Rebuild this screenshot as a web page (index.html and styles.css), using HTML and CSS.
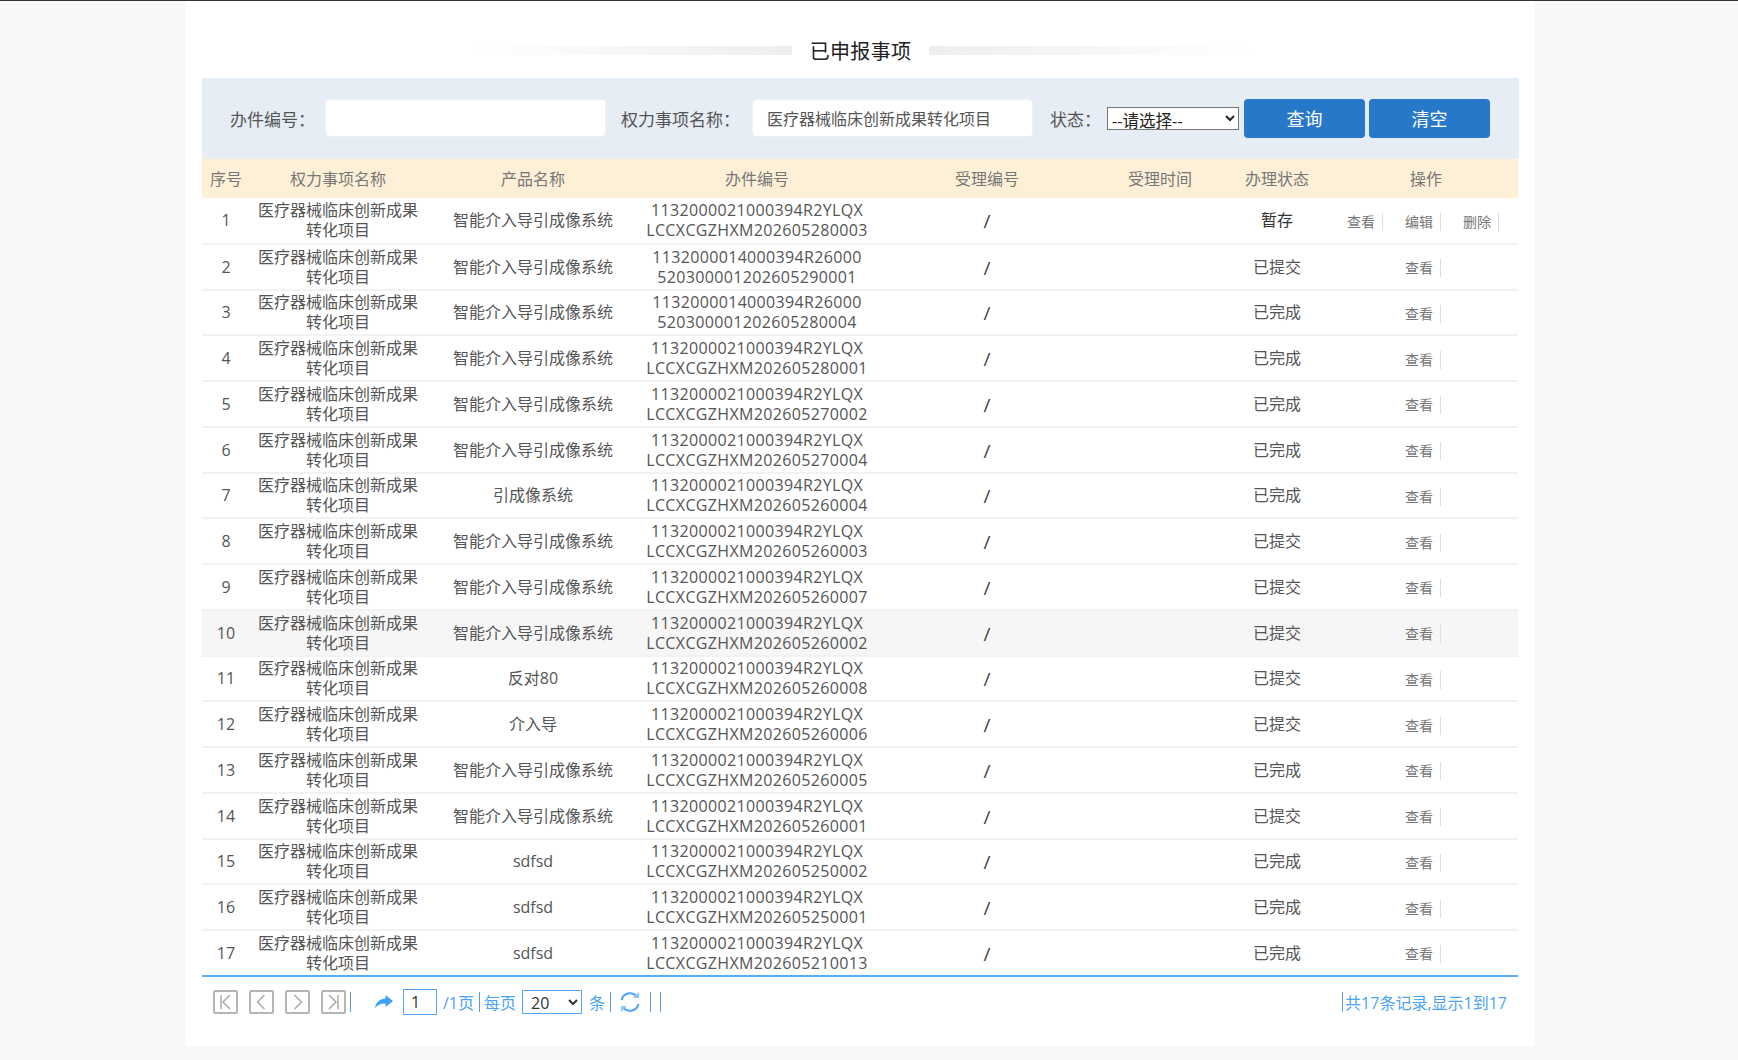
FILE: index.html
```html
<!DOCTYPE html>
<html lang="zh-CN">

<head>
    <meta charset="UTF-8">
    <title>已申报事项</title>
    <link rel="stylesheet" href="styles.css">
</head>

<body>
    <div class="panel">
        <div class="title-row">
            <span class="bar bar-left"></span>
            <h2>已申报事项</h2>
            <span class="bar bar-right"></span>
        </div>

        <!-- Search -->
        <div class="search">
            <label class="lbl-no">办件编号：</label>
            <input class="txt" type="text">
            <label class="lbl-name">权力事项名称：</label>
            <input class="txt" type="text" value="医疗器械临床创新成果转化项目">
            <label class="lbl-state">状态：</label>
            <select class="state"><option>--请选择--</option></select>
            <button class="btn">查询</button>
            <button class="btn">清空</button>
        </div>

        <table class="list">
            <colgroup>
                <col class="c1"><col class="c2"><col class="c3"><col class="c4">
                <col class="c5"><col class="c6"><col class="c7"><col class="c8">
            </colgroup>
            <thead>
                <tr><th>序号</th><th>权力事项名称</th><th>产品名称</th><th>办件编号</th><th>受理编号</th><th>受理时间</th><th>办理状态</th><th>操作</th></tr>
            </thead>
            <tbody>
                <tr><td>1</td><td>医疗器械临床创新成果<br>转化项目</td><td>智能介入导引成像系统</td><td class="no">1132000021000394R2YLQX<br>LCCXCGZHXM202605280003</td><td class="slash">/</td><td></td><td class="dark">暂存</td><td class="ops"><a>查看</a><a>编辑</a><a>删除</a></td></tr>
                <tr><td>2</td><td>医疗器械临床创新成果<br>转化项目</td><td>智能介入导引成像系统</td><td class="no">1132000014000394R26000<br>520300001202605290001</td><td class="slash">/</td><td></td><td>已提交</td><td class="ops"><a>查看</a></td></tr>
                <tr><td>3</td><td>医疗器械临床创新成果<br>转化项目</td><td>智能介入导引成像系统</td><td class="no">1132000014000394R26000<br>520300001202605280004</td><td class="slash">/</td><td></td><td>已完成</td><td class="ops"><a>查看</a></td></tr>
                <tr><td>4</td><td>医疗器械临床创新成果<br>转化项目</td><td>智能介入导引成像系统</td><td class="no">1132000021000394R2YLQX<br>LCCXCGZHXM202605280001</td><td class="slash">/</td><td></td><td>已完成</td><td class="ops"><a>查看</a></td></tr>
                <tr><td>5</td><td>医疗器械临床创新成果<br>转化项目</td><td>智能介入导引成像系统</td><td class="no">1132000021000394R2YLQX<br>LCCXCGZHXM202605270002</td><td class="slash">/</td><td></td><td>已完成</td><td class="ops"><a>查看</a></td></tr>
                <tr><td>6</td><td>医疗器械临床创新成果<br>转化项目</td><td>智能介入导引成像系统</td><td class="no">1132000021000394R2YLQX<br>LCCXCGZHXM202605270004</td><td class="slash">/</td><td></td><td>已完成</td><td class="ops"><a>查看</a></td></tr>
                <tr><td>7</td><td>医疗器械临床创新成果<br>转化项目</td><td>引成像系统</td><td class="no">1132000021000394R2YLQX<br>LCCXCGZHXM202605260004</td><td class="slash">/</td><td></td><td>已完成</td><td class="ops"><a>查看</a></td></tr>
                <tr><td>8</td><td>医疗器械临床创新成果<br>转化项目</td><td>智能介入导引成像系统</td><td class="no">1132000021000394R2YLQX<br>LCCXCGZHXM202605260003</td><td class="slash">/</td><td></td><td>已提交</td><td class="ops"><a>查看</a></td></tr>
                <tr><td>9</td><td>医疗器械临床创新成果<br>转化项目</td><td>智能介入导引成像系统</td><td class="no">1132000021000394R2YLQX<br>LCCXCGZHXM202605260007</td><td class="slash">/</td><td></td><td>已提交</td><td class="ops"><a>查看</a></td></tr>
                <tr class="hover"><td>10</td><td>医疗器械临床创新成果<br>转化项目</td><td>智能介入导引成像系统</td><td class="no">1132000021000394R2YLQX<br>LCCXCGZHXM202605260002</td><td class="slash">/</td><td></td><td>已提交</td><td class="ops"><a>查看</a></td></tr>
                <tr><td>11</td><td>医疗器械临床创新成果<br>转化项目</td><td>反对80</td><td class="no">1132000021000394R2YLQX<br>LCCXCGZHXM202605260008</td><td class="slash">/</td><td></td><td>已提交</td><td class="ops"><a>查看</a></td></tr>
                <tr><td>12</td><td>医疗器械临床创新成果<br>转化项目</td><td>介入导</td><td class="no">1132000021000394R2YLQX<br>LCCXCGZHXM202605260006</td><td class="slash">/</td><td></td><td>已提交</td><td class="ops"><a>查看</a></td></tr>
                <tr><td>13</td><td>医疗器械临床创新成果<br>转化项目</td><td>智能介入导引成像系统</td><td class="no">1132000021000394R2YLQX<br>LCCXCGZHXM202605260005</td><td class="slash">/</td><td></td><td>已完成</td><td class="ops"><a>查看</a></td></tr>
                <tr><td>14</td><td>医疗器械临床创新成果<br>转化项目</td><td>智能介入导引成像系统</td><td class="no">1132000021000394R2YLQX<br>LCCXCGZHXM202605260001</td><td class="slash">/</td><td></td><td>已提交</td><td class="ops"><a>查看</a></td></tr>
                <tr><td>15</td><td>医疗器械临床创新成果<br>转化项目</td><td>sdfsd</td><td class="no">1132000021000394R2YLQX<br>LCCXCGZHXM202605250002</td><td class="slash">/</td><td></td><td>已完成</td><td class="ops"><a>查看</a></td></tr>
                <tr><td>16</td><td>医疗器械临床创新成果<br>转化项目</td><td>sdfsd</td><td class="no">1132000021000394R2YLQX<br>LCCXCGZHXM202605250001</td><td class="slash">/</td><td></td><td>已完成</td><td class="ops"><a>查看</a></td></tr>
                <tr><td>17</td><td>医疗器械临床创新成果<br>转化项目</td><td>sdfsd</td><td class="no">1132000021000394R2YLQX<br>LCCXCGZHXM202605210013</td><td class="slash">/</td><td></td><td>已完成</td><td class="ops"><a>查看</a></td></tr>
            </tbody>
        </table>

        <!-- Pager -->
        <div class="pager">
            <div class="pager-left">
                <svg class="pg" viewBox="0 0 25 24"><rect x="1" y="1" width="23" height="22" rx="1"/><path d="M8 5v14M17 5l-7 7 7 7"/></svg>
                <svg class="pg" viewBox="0 0 25 24"><rect x="1" y="1" width="23" height="22" rx="1"/><path d="M15.500 5l-7 7 7 7"/></svg>
                <svg class="pg" viewBox="0 0 25 24"><rect x="1" y="1" width="23" height="22" rx="1"/><path d="M9.500 5l7 7-7 7"/></svg>
                <svg class="pg" viewBox="0 0 25 24"><rect x="1" y="1" width="23" height="22" rx="1"/><path d="M17 5v14M8 5l7 7-7 7"/></svg>
                <i class="sep sep-first"></i>
                <svg class="go" viewBox="0 0 18 13"><path d="M10.500 0L18 6l-7.500 6V8.500C6 8.300 2.800 9.800 0 13c.8-5.500 4.500-9 10.500-9.500z"/></svg>
                <input class="page-no" type="text" value="1">
                <span class="total">/1页</span>
                <i class="sep"></i>
                <span>每页</span>
                <select class="size"><option>20</option></select>
                <span>条</span>
                <i class="sep"></i>
                <svg class="reload" viewBox="0 0 22 22"><path d="M2.500 9A8.800 8.800 0 0 1 17.500 5"/><path d="M19.500 13A8.800 8.800 0 0 1 4.500 17"/><path class="tip" d="M20 1v6h-6z"/><path class="tip" d="M2 21v-6h6z"/></svg>
                <i class="sep sep-tight"></i>
                <i class="sep"></i>
            </div>
            <div class="pager-right"><i class="sep"></i>共17条记录,显示1到17</div>
        </div>
    </div>
</body>

</html>
```

FILE: styles.css
```css
/* General */
html, body {
    height: 100%;
}

body {
    margin: 0;
    padding-right: 18px;
    background: #f8f8f8;
    box-sizing: border-box;
    border-top: 1px solid #333;
    overflow: hidden;
    font-family: "Open Sans", "Noto Sans CJK SC", sans-serif;
    font-size: 16px;
    color: #555;
}

.panel {
    width: 1350px;
    height: 1045px;
    margin: 0 auto;
    padding: 0 16px 0 17px;
    box-sizing: border-box;
    background: #fff;
}

/* Title */
.title-row {
    height: 77px;
    display: flex;
    justify-content: center;
    align-items: flex-start;
    padding-top: 37px;
    box-sizing: border-box;
}

.title-row h2 {
    margin: 0 18px;
    font-size: 20px;
    line-height: 28px;
    letter-spacing: 0.3px;
    font-weight: 400;
    color: #222;
}

.bar {
    width: 320px;
    height: 9px;
    margin-top: 8px;
}

.bar-left {
    background: linear-gradient(90deg, #fff, #eee);
}

.bar-right {
    background: linear-gradient(90deg, #eee, #fff);
}

/* Search */
.search {
    height: 81px;
    padding-bottom: 1px;
    box-sizing: border-box;
    background: #e6edf5;
    display: flex;
    align-items: center;
    font-size: 17px;
    color: #555;
}

.search label {
    white-space: nowrap;
}

.lbl-no {
    margin: 0 10px 0 28px;
}

.lbl-name {
    margin: 0 12px 0 15px;
}

.lbl-state {
    margin: 0 6px 0 17px;
}

.txt {
    width: 281px;
    height: 38px;
    box-sizing: border-box;
    border: 1px solid #eef1f5;
    border-radius: 4px;
    background: #fff;
    padding: 0 14px;
    font: inherit;
    font-size: 16px;
    color: #555;
    outline: none;
}

.state {
    width: 132px;
    height: 23px;
    margin-right: 5px;
    font: 16.5px "Open Sans", "Noto Sans CJK SC", sans-serif;
    color: #222;
    background: #fff;
}

.btn {
    width: 121px;
    height: 39px;
    margin-right: 4px;
    border: none;
    border-radius: 4px;
    background: #2778c9;
    color: #fff;
    font: inherit;
    font-size: 18px;
}

/* List */
.list {
    width: 1316px;
    table-layout: fixed;
    border-collapse: collapse;
    border-bottom: 2px solid #55adf5;
}

.c1 { width: 48px; }
.c2 { width: 176px; }
.c3 { width: 214px; }
.c4 { width: 234px; }
.c5 { width: 226px; }
.c6 { width: 120px; }
.c7 { width: 114px; }
.c8 { width: 184px; }

.list th {
    height: 39px;
    padding: 0 0 2px;
    box-sizing: border-box;
    background: #fef0d7;
    font-weight: 400;
    color: #777;
}

.list td {
    height: 45.76px;
    padding: 0;
    box-sizing: border-box;
    text-align: center;
    line-height: 20px;
    border-bottom: 2px solid #f2f2f2;
}

.list tbody tr:last-child td {
    border-bottom: none;
}

.list tr.hover td {
    background: #f6f6f6;
}

.list .no {
    letter-spacing: 0.35px;
}

.list .dark {
    color: #333;
}

.list .slash {
    padding-top: 2px;
    font-size: 19px;
    color: #444;
}

.list .ops {
    padding: 3px 6px 0 0;
    font-size: 14px;
    color: #777;
    white-space: nowrap;
}

.ops a {
    display: inline-block;
    width: 36px;
    box-sizing: border-box;
    margin: 0 11px;
    padding-right: 7px;
    line-height: 18px;
    border-right: 1px solid #d9dfe8;
}

/* Pager */
.pager {
    display: flex;
    justify-content: space-between;
    align-items: center;
    height: 50px;
    padding: 0 12px 0 11px;
    font-size: 16px;
    color: #4ba3f5;
}

.pager-left, .pager-right {
    display: flex;
    align-items: center;
}

.sep {
    width: 1px;
    height: 20px;
    background: #5a9be0;
    margin: 0 4px 0 5px;
}

.pager-right .sep {
    margin-right: 2px;
}

.sep-tight {
    margin-left: 4px;
}

.pg {
    width: 25px;
    height: 24px;
    margin-right: 11px;
    fill: none;
    stroke: #b5b5b5;
    stroke-width: 2;
}

.pg path {
    stroke: #aaa;
    stroke-width: 1.5;
}

.pg:nth-of-type(4) {
    margin-right: 0;
}

.sep-first {
    margin-right: 24px;
    margin-left: 4px;
}

.go {
    width: 18px;
    height: 13px;
    margin-right: 10px;
    fill: #3ea0fb;
}

.page-no {
    width: 34px;
    height: 26px;
    box-sizing: border-box;
    border: 1px solid #55a7f5;
    padding: 0 0 0 7px;
    font: inherit;
    color: #333;
    outline: none;
}

.total {
    margin-left: 6px;
}

.size {
    width: 60px;
    height: 24px;
    margin: 0 7px 0 6px;
    border: 1px solid #55a7f5;
    border-radius: 0;
    background: #fff;
    font: inherit;
    color: #333;
    padding-left: 4px;
}

.reload {
    width: 22px;
    height: 22px;
    margin: 0 5px 0 4px;
    fill: none;
    stroke: #4ba3f5;
    stroke-width: 2;
}

.reload .tip {
    fill: #8cc5f8;
    stroke: none;
}
```
